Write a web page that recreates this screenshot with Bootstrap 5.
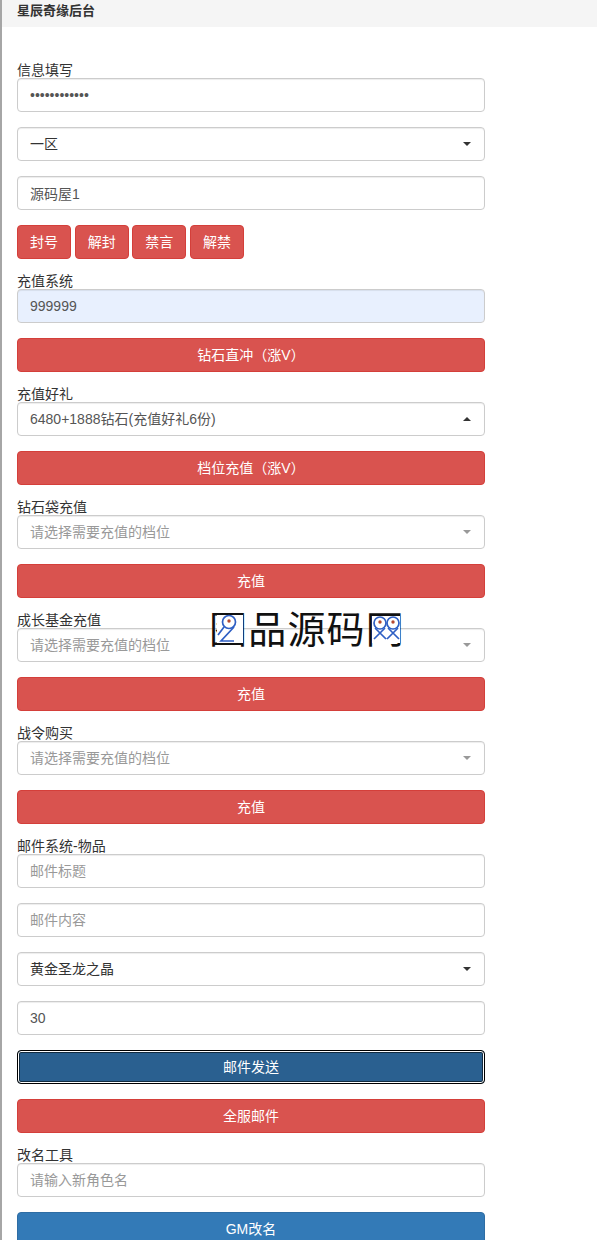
<!DOCTYPE html>
<html lang="zh">
<head>
<meta charset="utf-8">
<title>星辰奇缘后台</title>
<link href="https://cdn.jsdelivr.net/npm/bootstrap@5.3.0/dist/css/bootstrap.min.css" rel="stylesheet">
<style>
html,body{height:1240px;overflow:hidden;}
body{font-family:"Liberation Sans","Noto Sans CJK SC",sans-serif;font-size:14px;color:#333;background:#fff;}
.shell{position:relative;height:1240px;overflow:hidden;border-left:2px solid #a6a6a6;}
.topbar{height:27px;background:#f5f5f5;padding:1px 15px 0;font-weight:700;font-size:13px;line-height:20px;color:#333;}
.formbody{padding:36px 0 0 15px;width:483px;}
.blk{margin-bottom:15px;}
.btnrow{gap:3.67px;}
.cap{display:block;height:15px;line-height:15px;font-size:14px;margin:0;color:#333;}
.form-control,.form-select{height:34px;padding:6px 12px;font-size:14px;line-height:20px;color:#555;border:1px solid #ccc;border-radius:4px;box-shadow:inset 0 1px 1px rgba(0,0,0,.075);background-color:#fff;}
.form-control::placeholder{color:#999;}
.form-select{background-position:right 13px center;background-size:8px 4px;padding-right:28px;color:#333;
background-image:url("data:image/svg+xml,%3Csvg xmlns='http://www.w3.org/2000/svg' viewBox='0 0 8 4'%3E%3Cpath d='M0 0h8L4 4z' fill='%23333'/%3E%3C/svg%3E");}
.sel-open{background-image:url("data:image/svg+xml,%3Csvg xmlns='http://www.w3.org/2000/svg' viewBox='0 0 8 4'%3E%3Cpath d='M0 4h8L4 0z' fill='%23333'/%3E%3C/svg%3E");color:#555;}
.sel-empty{color:#999;background-image:url("data:image/svg+xml,%3Csvg xmlns='http://www.w3.org/2000/svg' viewBox='0 0 8 4'%3E%3Cpath d='M0 0h8L4 4z' fill='%23999'/%3E%3C/svg%3E");}
.filled{background-color:#e8f0fe;}
.pw{font-family:"Liberation Sans",sans-serif;}
.act{height:34px;padding:6px 12px;font-size:14px;line-height:20px;border-radius:4px;color:#fff;}
.act-red{background:#d9534f;border:1px solid #d43f3a;}
.act-blue{background:#337ab7;border:1px solid #2e6da4;}
.act-on{background:#2a6090;border:1px solid #000;box-shadow:inset 0 0 0 1px #fff,inset 0 0 0 2px #122b40;}
.wm{position:absolute;left:207px;top:602px;font-family:"Noto Sans CJK SC",sans-serif;font-weight:400;font-size:38px;line-height:50px;letter-spacing:1.2px;color:#111;white-space:nowrap;pointer-events:none;}
.wmpin{position:absolute;left:0;top:0;width:597px;height:1240px;pointer-events:none;}
</style>
</head>
<body>
<div class="shell">
  <div class="topbar">星辰奇缘后台</div>
  <div class="formbody">
    <div class="blk"><label class="cap">信息填写</label><input type="password" class="form-control pw" value="123456789012"></div>
    <div class="blk"><select class="form-select"><option>一区</option></select></div>
    <div class="blk"><input type="text" class="form-control" value="源码屋1"></div>
    <div class="blk d-flex btnrow">
      <button class="btn act act-red">封号</button>
      <button class="btn act act-red">解封</button>
      <button class="btn act act-red">禁言</button>
      <button class="btn act act-red">解禁</button>
    </div>
    <div class="blk"><label class="cap">充值系统</label><input type="text" class="form-control filled" value="999999"></div>
    <div class="blk"><button class="btn act act-red w-100">钻石直冲（涨V）</button></div>
    <div class="blk"><label class="cap">充值好礼</label><select class="form-select sel-open"><option>6480+1888钻石(充值好礼6份)</option></select></div>
    <div class="blk"><button class="btn act act-red w-100">档位充值（涨V）</button></div>
    <div class="blk"><label class="cap">钻石袋充值</label><select class="form-select sel-empty"><option>请选择需要充值的档位</option></select></div>
    <div class="blk"><button class="btn act act-red w-100">充值</button></div>
    <div class="blk"><label class="cap">成长基金充值</label><select class="form-select sel-empty"><option>请选择需要充值的档位</option></select></div>
    <div class="blk"><button class="btn act act-red w-100">充值</button></div>
    <div class="blk"><label class="cap">战令购买</label><select class="form-select sel-empty"><option>请选择需要充值的档位</option></select></div>
    <div class="blk"><button class="btn act act-red w-100">充值</button></div>
    <div class="blk"><label class="cap">邮件系统-物品</label><input type="text" class="form-control" placeholder="邮件标题"></div>
    <div class="blk"><input type="text" class="form-control" placeholder="邮件内容"></div>
    <div class="blk"><select class="form-select"><option>黄金圣龙之晶</option></select></div>
    <div class="blk"><input type="text" class="form-control" value="30"></div>
    <div class="blk"><button class="btn act act-on w-100">邮件发送</button></div>
    <div class="blk"><button class="btn act act-red w-100">全服邮件</button></div>
    <div class="blk"><label class="cap">改名工具</label><input type="text" class="form-control" placeholder="请输入新角色名"></div>
    <div class="blk"><button class="btn act act-blue w-100">GM改名</button></div>
  </div>
  <div class="wm">图品源码网</div>
  <svg class="wmpin" viewBox="2 0 597 1240" aria-hidden="true">
    <!-- map pins of the watermark logo -->
    <rect x="217" y="615" width="26" height="28" fill="#fff"/>
    <circle cx="229" cy="622" r="6.5" fill="none" stroke="#2f5fc4" stroke-width="1.7"/>
    <path d="M224 627l-6 8M234 627l-13 14h13" fill="none" stroke="#2f5fc4" stroke-width="1.7"/>
    <circle cx="229" cy="621" r="1.7" fill="#b5482f"/>
    <rect x="372" y="616" width="28" height="27" fill="#fff"/>
    <circle cx="380" cy="623" r="6" fill="none" stroke="#2f5fc4" stroke-width="1.7"/>
    <circle cx="393" cy="623" r="6" fill="none" stroke="#2f5fc4" stroke-width="1.7"/>
    <path d="M375 628l11 11M398 628l-11 11M385 628l-11 11M388 628l11 11" fill="none" stroke="#2f5fc4" stroke-width="1.7"/>
    <circle cx="380" cy="622" r="1.7" fill="#b5482f"/>
    <circle cx="393" cy="622" r="1.7" fill="#b5482f"/>
  </svg>
</div>
<script src="https://cdn.jsdelivr.net/npm/bootstrap@5.3.0/dist/js/bootstrap.bundle.min.js"></script>
</body>
</html>
